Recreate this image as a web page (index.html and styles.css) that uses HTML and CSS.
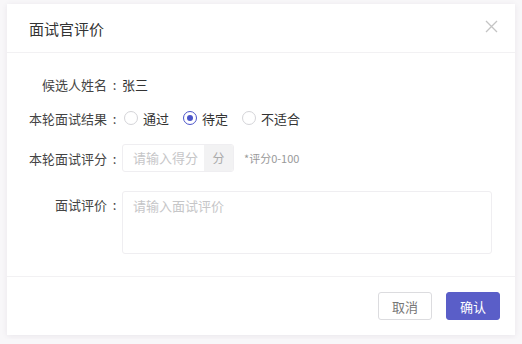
FILE: index.html
```html
<!DOCTYPE html>
<html lang="zh">

<head>
    <meta charset="UTF-8">
    <title>面试官评价</title>
    <link rel="stylesheet" href="styles.css">
</head>

<body>
    <div class="dialog">
        <div class="dialog-header">
            <span class="dialog-title">面试官评价</span>
            <span class="dialog-close">
                <svg width="13" height="13" viewBox="0 0 13 13">
                    <path d="M1 1L12 12M12 1L1 12" stroke="#c4c4c4" stroke-width="1.3" fill="none" />
                </svg>
            </span>
        </div>
        <div class="dialog-body">
            <div class="form-row row-name">
                <label class="form-label">候选人姓名<span class="colon">:</span></label>
                <div class="form-value">张三</div>
            </div>
            <div class="form-row row-result">
                <label class="form-label">本轮面试结果<span class="colon">:</span></label>
                <div class="radio-group">
                    <span class="radio"><span class="radio-dot"></span>通过</span>
                    <span class="radio radio-checked"><span class="radio-dot"></span>待定</span>
                    <span class="radio"><span class="radio-dot"></span>不适合</span>
                </div>
            </div>
            <div class="form-row row-score">
                <label class="form-label">本轮面试评分<span class="colon">:</span></label>
                <div class="input-group">
                    <span class="input-inner">请输入得分</span>
                    <span class="input-addon">分</span>
                </div>
                <span class="form-tip">*评分0-100</span>
            </div>
            <div class="form-row row-comment">
                <label class="form-label">面试评价<span class="colon">:</span></label>
                <div class="textarea">请输入面试评价</div>
            </div>
        </div>
        <div class="dialog-footer">
            <button class="btn btn-default">取消</button>
            <button class="btn btn-primary">确认</button>
        </div>
    </div>
</body>

</html>
```

FILE: styles.css
```css
* {
    margin: 0;
    padding: 0;
    box-sizing: border-box;
}

body {
    background: #f8f7f9;
    padding: 4px 7px;
    font-family: "Noto Sans CJK SC", "Noto Sans", sans-serif;
    color: #333;
    font-size: 13px;
}

.dialog {
    width: 508px;
    height: 331px;
    background: #fff;
    box-shadow: 0 1px 6px rgba(60, 40, 80, .08);
    display: flex;
    flex-direction: column;
}

.dialog-header {
    height: 49px;
    padding: 0 17px 0 22px;
    display: flex;
    align-items: center;
    justify-content: space-between;
    border-bottom: 1px solid #f2f1f3;
}

.dialog-title {
    font-size: 15px;
    color: #333;
}

.dialog-close {
    display: flex;
    margin-top: -4px;
}

.dialog-body {
    flex: 1;
    padding: 17px 22px 0 22px;
}

.form-row {
    display: flex;
    align-items: center;
    min-height: 28px;
}

.row-result {
    margin-top: 6px;
}

.row-score {
    margin-top: 12px;
}

.row-comment {
    margin-top: 19px;
    align-items: flex-start;
}

.form-label {
    width: 93px;
    text-align: right;
    color: #444;
    flex-shrink: 0;
    white-space: nowrap;
}

.colon {
    display: inline-block;
    width: 15px;
    text-align: center;
}

.row-comment .form-label {
    padding-top: 4px;
}

.form-value {
    color: #333;
}

.radio-group {
    display: flex;
    gap: 14px;
    margin-left: 2px;
}

.radio {
    display: flex;
    align-items: center;
    color: #333;
}

.radio-dot {
    width: 14px;
    height: 14px;
    border: 1px solid #d4d4d8;
    border-radius: 50%;
    margin-right: 5px;
    display: flex;
    align-items: center;
    justify-content: center;
}

.radio-checked .radio-dot {
    border-color: #4b54c9;
}

.radio-checked .radio-dot::after {
    content: "";
    width: 6px;
    height: 6px;
    border-radius: 50%;
    background: #4b54c9;
}

.input-group {
    width: 112px;
    height: 28px;
    border: 1px solid #efeef1;
    border-radius: 3px;
    display: flex;
    overflow: hidden;
}

.input-inner {
    flex: 1;
    padding-left: 10px;
    line-height: 26px;
    color: #c6c6c8;
}

.input-addon {
    width: 29px;
    background: #f2f2f3;
    text-align: center;
    line-height: 26px;
    color: #aaa;
    font-size: 12px;
}

.form-tip {
    margin-left: 10px;
    font-size: 11px;
    color: #999;
}

.textarea {
    width: 370px;
    height: 63px;
    border: 1px solid #efeef1;
    border-radius: 3px;
    padding: 4px 10px;
    color: #c6c6c8;
}

.dialog-footer {
    height: 59px;
    border-top: 1px solid #f2f1f3;
    display: flex;
    justify-content: flex-end;
    align-items: flex-start;
    gap: 14px;
    padding: 15px 15px 0 0;
}

.btn {
    width: 54px;
    height: 28px;
    border-radius: 3px;
    font-family: inherit;
    font-size: 13px;
    cursor: pointer;
}

.btn-default {
    background: #fff;
    border: 1px solid #dcdcdf;
    color: #777;
}

.btn-primary {
    background: #5a5ec8;
    border: 1px solid #5a5ec8;
    color: #fff;
}
```
